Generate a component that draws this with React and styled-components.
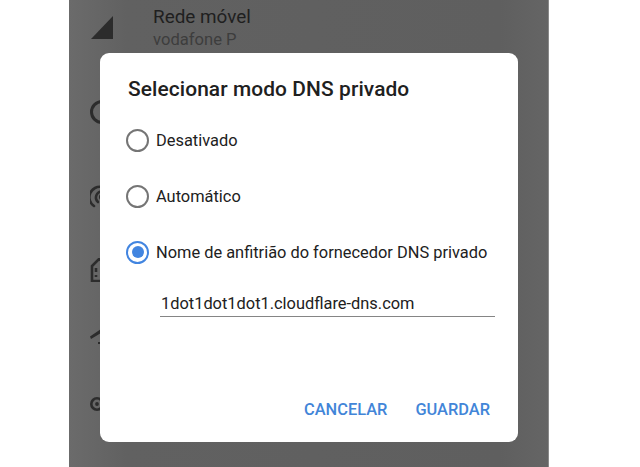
import React from "react";
import styled, { createGlobalStyle } from "styled-components";

const Global = createGlobalStyle`
  html, body { margin: 0; padding: 0; background: #fff; }
  body { font-family: Roboto, "Liberation Sans", sans-serif; }
`;
const Page = styled.div`
  position: relative;
  width: 640px;
  height: 467px;
  overflow: hidden;
  background: #fff;
`;
const Screen = styled.div`
  width: 480px;
  height: 467px;
  margin-left: 69px;
  padding: 0 0 0 21px;
  box-sizing: border-box;
  background: linear-gradient(90deg, #6b6b6b 0%, #616161 12%, #5f5f5f 90%, #656565 100%);
  border-right: 1px solid #8a8a8a;
  display: flex;
  flex-direction: column;
`;
const Row = styled.div`
  height: ${p => p.$h}px;
  display: flex;
  align-items: flex-start;
  gap: 39px;
  flex: none;
`;
const IconSlot = styled.div`
  width: 24px;
  height: 24px;
  flex: none;
  margin-top: ${p => p.$top}px;
  color: #2c2c2c;
`;
const RowText = styled.div`
  padding-top: 5px;
`;
const RowTitle = styled.div`
  font-size: 18.9px;
  line-height: 24px;
  color: #1f1f1f;
`;
const RowSub = styled.div`
  font-size: 16.6px;
  line-height: 22px;
  color: #3d3d3d;
`;
const Dialog = styled.div`
  position: absolute;
  left: 100px;
  top: 53px;
  width: 418px;
  height: 389px;
  box-sizing: border-box;
  background: #fff;
  border-radius: 9px;
  padding: 24px 28px 0 28px;
  display: flex;
  flex-direction: column;
`;
const Title = styled.h2`
  margin: 0 0 10px;
  font-size: 20.9px;
  font-weight: 500;
  line-height: 25px;
  color: #202020;
  letter-spacing: 0.1px;
`;
const Option = styled.label`
  height: 56px;
  display: flex;
  align-items: center;
  gap: 7px;
  font-size: 16.4px;
  color: #212121;
  margin-left: -2px;
`;
const Radio = styled.span`
  width: 23px;
  height: 23px;
  box-sizing: border-box;
  border-radius: 50%;
  border: 2.5px solid ${p => (p.$on ? "#4285e0" : "#757575")};
  display: flex;
  align-items: center;
  justify-content: center;
  flex: none;
  &::after {
    content: "";
    display: ${p => (p.$on ? "block" : "none")};
    width: 12px;
    height: 12px;
    border-radius: 50%;
    background: #4285e0;
  }
`;
const Field = styled.div`
  margin: 8px -5px 0 32px;
  height: 29px;
  padding: 2px 0 0 1px;
  box-sizing: border-box;
  border-bottom: 1.5px solid #858585;
  font-size: 16.4px;
  line-height: 28px;
  color: #212121;
`;
const Actions = styled.div`
  margin-top: auto;
  padding-bottom: 22px;
  display: flex;
  justify-content: flex-end;
  gap: 28px;
`;
const Action = styled.button`
  all: unset;
  font-family: Roboto, "Liberation Sans", sans-serif;
  font-size: 16.4px;
  font-weight: 500;
  line-height: 20px;
  color: #4285d8;
`;

const Tri = () => (
  <svg viewBox="0 0 24 24" width="24" height="24" fill="currentColor"><path d="M1 24 L23 1 V24 Z" /></svg>
);
const Ring = () => (
  <svg viewBox="0 0 24 24" width="24" height="24" fill="none" stroke="currentColor" strokeWidth="3"><circle cx="12" cy="12" r="10.5" /></svg>
);
const Hotspot = () => (
  <svg viewBox="0 0 24 24" width="24" height="24" fill="none" stroke="currentColor" strokeWidth="2.6" strokeLinecap="round"><path d="M4 21 A10.5 10.5 0 0 1 12 2" /><path d="M8 17 A6 6 0 0 1 12 6.5" /><circle cx="12" cy="12" r="1.8" fill="currentColor" /></svg>
);
const House = () => (
  <svg viewBox="0 0 24 24" width="24" height="24" fill="none" stroke="currentColor" strokeWidth="2.6"><path d="M2 23 V8 L9 1 L24 12 V23 Z" /><path d="M6 10 V14 M6 17 V19" /></svg>
);
const Plane = () => (
  <svg viewBox="0 0 24 24" width="24" height="24" fill="currentColor"><path d="M0 16.5 L11 9 V13 L1 19 Z M8 22 H12 V24 H8 Z" /></svg>
);
const Target = () => (
  <svg viewBox="0 0 24 24" width="24" height="24" fill="none" stroke="currentColor" strokeWidth="2.6"><circle cx="7" cy="12" r="5.7" /><circle cx="7" cy="12" r="1.9" fill="currentColor" stroke="none" /></svg>
);

export default function App() {
  return (
    <Page>
      <Global />
      <Screen>
        <Row $h={84}>
          <IconSlot $top={15}><Tri /></IconSlot>
          <RowText>
            <RowTitle>Rede móvel</RowTitle>
            <RowSub>vodafone P</RowSub>
          </RowText>
        </Row>
        <Row $h={84}><IconSlot $top={16}><Ring /></IconSlot></Row>
        <Row $h={72}><IconSlot $top={17}><Hotspot /></IconSlot></Row>
        <Row $h={70}><IconSlot $top={18}><House /></IconSlot></Row>
        <Row $h={68}><IconSlot $top={10}><Plane /></IconSlot></Row>
        <Row $h={70}><IconSlot $top={14}><Target /></IconSlot></Row>
      </Screen>
      <Dialog>
        <Title>Selecionar modo DNS privado</Title>
        <Option><Radio />Desativado</Option>
        <Option><Radio />Automático</Option>
        <Option><Radio $on />Nome de anfitrião do fornecedor DNS privado</Option>
        <Field>1dot1dot1dot1.cloudflare-dns.com</Field>
        <Actions>
          <Action>CANCELAR</Action>
          <Action>GUARDAR</Action>
        </Actions>
      </Dialog>
    </Page>
  );
}
